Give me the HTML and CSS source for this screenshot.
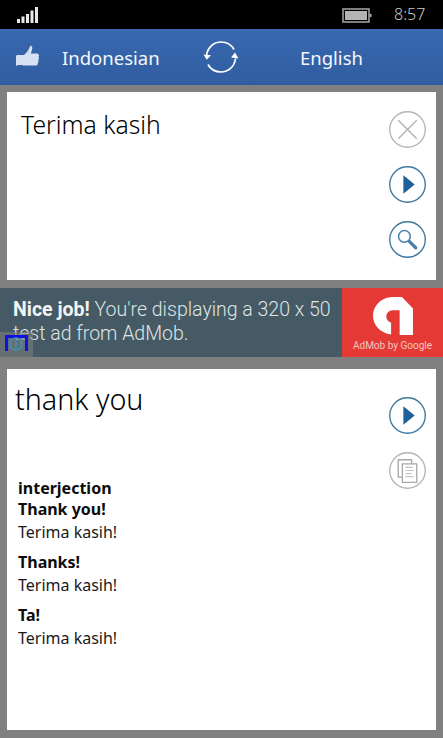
FILE: index.html
```
<!DOCTYPE html>
<html lang="en">
<head>
<meta charset="utf-8">
<title>Translator</title>
<link rel="stylesheet" href="styles.css">
</head>
<body>
<div class="status">
  <svg class="signal" width="22" height="16" viewBox="0 0 22 16"><path fill="#e8e8e8" d="M0 12h3v4H0zM4.500 9.500h3V16h-3zM9 7h3v9H9zM13.500 3.500h3V16h-3zM18 0h3v16h-3z"/></svg>
  <svg class="battery" width="30" height="15" viewBox="0 0 30 15"><rect x="1" y="1" width="26" height="13" fill="none" stroke="#a8a8a8" stroke-width="1.500"/><rect x="3" y="3" width="22" height="9" fill="#b4b4b4"/><rect x="27.500" y="6" width="2" height="3" fill="#a8a8a8"/></svg>
  <span class="clock">8:57</span>
</div>
<header class="bar">
  <svg class="thumb" width="26" height="26" viewBox="0 0 26 26"><path fill="#d6e1f2" d="M1 12.500c0-1 .8-1.500 1.500-1.500H9c2-1.500 4.500-4.500 5.500-7.500.4-1.300 1-2 1.700-1.700 1.300.5 1.300 2.500.8 4.200l-1.200 3.500h6c1.500 0 2.200 1 2.200 2 0 .7-.3 1.200-.6 1.500.5.400.7 1 .6 1.600 0 .6-.4 1.100-.8 1.400.4.400.5 1 .4 1.500-.1.600-.5 1-.9 1.300.2.400.2.800.1 1.200-.3.900-1 1.500-2.100 1.500H9c-1 0-1.500-.5-2.500-.5H2.500C1.500 22.500 1 22 1 21z"/></svg>
  <span class="lang lang-from">Indonesian</span>
  <svg class="swap" width="36" height="34" viewBox="0 0 36 34"><g fill="none" stroke="#fff" stroke-width="1.700"><path d="M3.500 15.500C4.500 7 11 2 18 2c5.500 0 10.500 2.800 13 7.500"/><path d="M32.500 18.500C31.500 27 25 32 18 32c-5.500 0-10.500-2.800-13-7.500"/></g><path fill="#fff" d="M0.500 14.500l7.500.8-4.300 4.500zM35.500 18.500l-7.500-1 4-5z"/></svg>
  <span class="lang lang-to">English</span>
</header>
<main class="page">
  <section class="card card-input">
    <div class="input-text">Terima kasih</div>
    <div class="actions actions-input">
      <button class="round round-gray" type="button"><svg width="37" height="37" viewBox="0 0 36 36"><circle cx="18" cy="18" r="17.300" fill="none" stroke="#b5b5b5" stroke-width="1.300"/><path stroke="#b0b0b0" stroke-width="1.300" d="M9 9l18 18M27 9L9 27"/></svg></button>
      <button class="round" type="button"><svg width="37" height="37" viewBox="0 0 36 36"><circle cx="18" cy="18" r="17.300" fill="none" stroke="#3d779f" stroke-width="1.300"/><path fill="#1f6299" d="M14 9l11 9-11 9z"/></svg></button>
      <button class="round" type="button"><svg width="37" height="37" viewBox="0 0 36 36"><circle cx="18" cy="18" r="17.300" fill="none" stroke="#3d779f" stroke-width="1.300"/><circle cx="15" cy="15" r="5.700" fill="none" stroke="#4a81a8" stroke-width="1.500"/><path stroke="#4a81a8" stroke-width="3.200" stroke-linecap="round" d="M20 20l6 6"/></svg></button>
    </div>
  </section>
  <aside class="ad">
    <div class="ad-copy"><b>Nice job!</b> You're displaying a 320 x 50 test ad from AdMob.</div>
    <div class="ad-logo">
      <svg width="42" height="38" viewBox="0 0 42 40"><path fill="#fff" d="M21 0h9.500L42 12v28H28V14h-7c-4 0-7 3-7 6.500 0 3.500 2 5.500 5 6.500v12.500C8 38 0 30 0 20 0 9 9 0 21 0z"/></svg>
      <span class="ad-brand">AdMob by Google</span>
    </div>
    <div class="ad-info"><span class="ad-info-mark"></span><svg class="ad-info-icon" width="16" height="16" viewBox="0 0 16 16"><circle cx="8" cy="8" r="6" fill="none" stroke="#3a95b8" stroke-width="1.600"/><path stroke="#3a95b8" stroke-width="1.600" d="M8 5v7"/></svg></div>
  </aside>
  <section class="card card-output">
    <div class="output-text">thank you</div>
    <div class="actions actions-output">
      <button class="round" type="button"><svg width="37" height="37" viewBox="0 0 36 36"><circle cx="18" cy="18" r="17.300" fill="none" stroke="#3d779f" stroke-width="1.300"/><path fill="#1f6299" d="M14 9l11 9-11 9z"/></svg></button>
      <button class="round round-gray" type="button"><svg width="37" height="37" viewBox="0 0 36 36"><circle cx="18" cy="18" r="17.300" fill="none" stroke="#b5b5b5" stroke-width="1.300"/><path fill="#fff" stroke="#a8a8a8" stroke-width="1.300" d="M9 7.500h13v17H9z"/><path fill="#fff" stroke="#a8a8a8" stroke-width="1.300" d="M13 11.500h14v18H13z"/><path stroke="#c4c4c4" stroke-width="1.200" d="M16 15h7M16 18h8M16 21h6M16 24h8"/></svg></button>
    </div>
    <div class="entries">
      <div class="pos">interjection</div>
      <div class="entry"><div class="term">Thank you!</div><div class="gloss">Terima kasih!</div></div>
      <div class="entry"><div class="term">Thanks!</div><div class="gloss">Terima kasih!</div></div>
      <div class="entry"><div class="term">Ta!</div><div class="gloss">Terima kasih!</div></div>
    </div>
  </section>
</main>
</body>
</html>
```

FILE: styles.css
```
* { box-sizing: border-box; }
html, body { margin: 0; padding: 0; }
body {
  width: 443px;
  height: 738px;
  overflow: hidden;
  background: #808080;
  color: #111;
  font-family: "Noto Sans", "Open Sans", sans-serif;
}
.status {
  height: 29px;
  background: #000;
  display: flex;
  align-items: center;
  padding: 0 17px 0 17px;
}
.battery { margin-left: auto; margin-right: 22px; margin-top: 1px; }
.clock { color: #c8c8c8; font-size: 16px; font-weight: 300; line-height: 29px; width: 32px; }
.bar {
  height: 56px;
  background: linear-gradient(#3868b0, #315da0);
  display: flex;
  align-items: center;
  color: #fff;
}
.thumb { margin-left: 15px; flex: none; }
.lang { font-size: 18.500px; color: #f4f7fb; white-space: nowrap; }
.lang-from { margin-left: 21px; width: 141px; }
.swap { flex: none; }
.lang-to { margin-left: 61px; }
.page { padding: 7px 0 8px; display: flex; flex-direction: column; }
.card { background: #fff; margin: 0 7px; position: relative; }
.card-input { height: 188px; padding: 15px 14px; }
.input-text { font-size: 24.700px; font-weight: 300; line-height: 36px; color: #000; }
.actions { position: absolute; right: 10px; display: flex; flex-direction: column; }
.actions-input { top: 19px; gap: 18px; }
.actions-output { top: 28px; gap: 18px; }
.round { width: 38px; height: 37px; padding: 0; border: 0; background: none; display: block; }
.round svg { display: block; margin: 0 auto; }
.ad {
  position: relative;
  height: 69px;
  margin-top: 8px;
  background: #455a64;
  display: flex;
  color: #dfe4e6;
}
.ad-copy {
  width: 342px;
  padding: 10px 4px 0 13px;
  font-family: Roboto, sans-serif;
  font-weight: 300;
  font-size: 19.500px;
  line-height: 24px;
}
.ad-copy b { font-weight: 700; color: #f2f4f5; }
.ad-logo {
  width: 101px;
  background: #e53935;
  display: flex;
  flex-direction: column;
  align-items: center;
  padding-top: 9px;
}
.ad-brand { font-family: Roboto, sans-serif; font-size: 10px; color: #f6c4c2; margin-top: 5px; white-space: nowrap; }
.ad-info {
  position: absolute;
  left: 0;
  bottom: 0;
  width: 33px;
  height: 25px;
  background: rgba(128, 128, 128, .55);
}
.ad-info-mark {
  position: absolute;
  left: 5px;
  top: 3px;
  width: 23px;
  height: 16px;
  border: 3px solid #1010e0;
  border-bottom: 0;
}
.ad-info-icon { position: absolute; left: 8px; top: 4px; }
.card-output { height: 361px; margin-top: 12px; padding: 8px 8px 0; }
.output-text { font-size: 28.700px; font-weight: 300; line-height: 44px; color: #000; }
.entries { padding: 52px 0 0 3px; }
.pos { font-size: 16px; line-height: 22px; font-weight: 700; color: #0c0c0c; margin-top: 4px; }
.entry { margin-bottom: 8px; }
.term { font-size: 16px; line-height: 21px; font-weight: 700; color: #0c0c0c; }
.gloss { font-size: 16px; line-height: 24px; color: #1a1a1a; }
```
